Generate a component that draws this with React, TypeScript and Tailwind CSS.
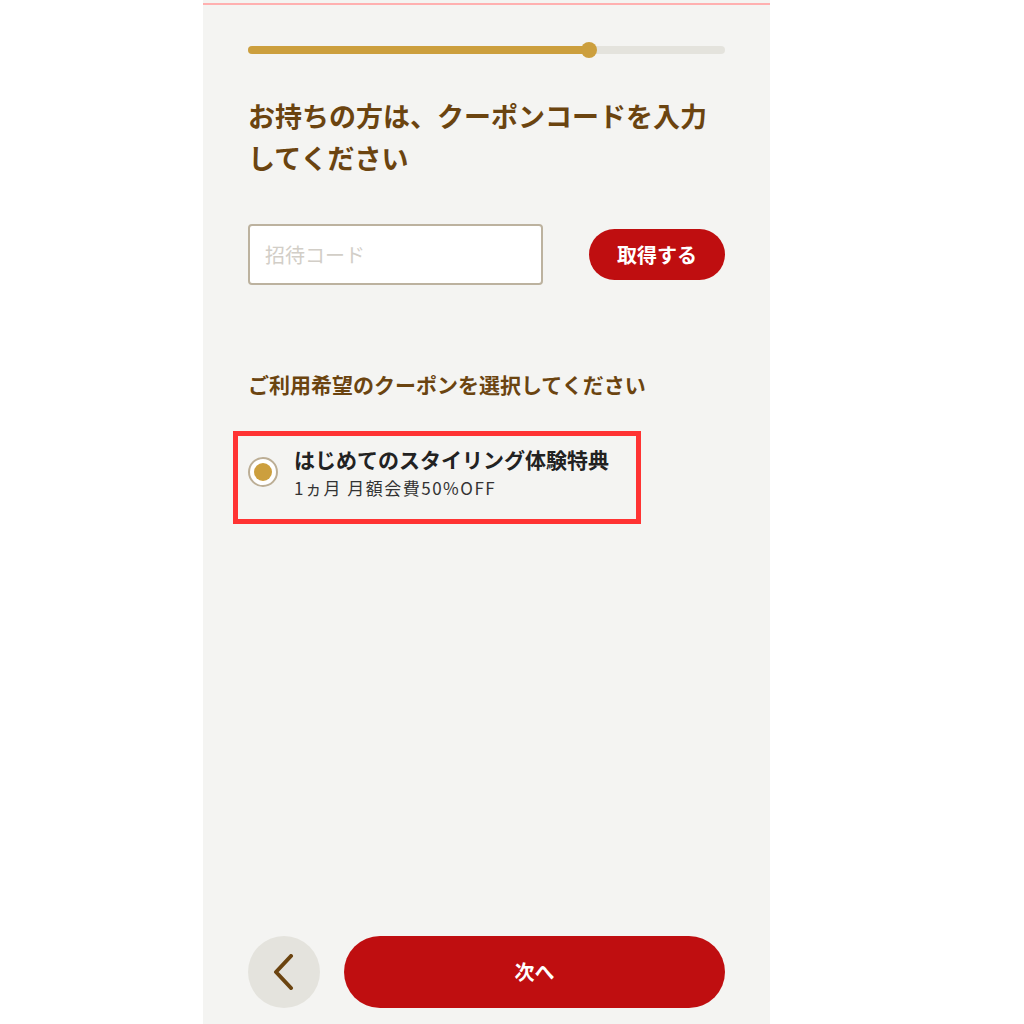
import { useState } from "react";

const jp = "font-['Noto_Sans_CJK_JP','Noto_Sans',sans-serif]";

export default function App() {
  const [code, setCode] = useState("");
  const [selected, setSelected] = useState(true);

  return (
    <div className={`flex min-h-screen justify-center bg-white ${jp}`}>
      <div className="ml-[-51px] flex h-[1024px] w-[567px] flex-col bg-[#f4f4f2] pt-[3px]">
        <div className="h-[2px] bg-[#ffb0b0]" />

        <div className="flex flex-1 flex-col px-[45px]">
          {/* progress */}
          <div className="relative mt-[41px] h-[8px] rounded-full bg-[#e4e3dd]">
            <div className="h-full w-[341px] rounded-full bg-[#cc9f3e]" />
            <div className="absolute left-[333px] top-[-4px] h-[16px] w-[16px] rounded-full bg-[#cc9f3e]" />
          </div>

          <h1 className="mt-[41px] text-[27px] font-bold leading-[42px] text-[#6b4410]">
            お持ちの方は、クーポンコードを入力してください
          </h1>

          <div className="mt-[45px] flex items-center justify-between">
            <input
              type="text"
              value={code}
              onChange={(e) => setCode(e.target.value)}
              placeholder="招待コード"
              className="h-[61px] w-[295px] rounded-[4px] border-2 border-[#bcb29f] bg-white px-[15px] text-[20px] text-[#333] outline-none placeholder:text-[#d2cec7]"
            />
            <button className="h-[51px] w-[136px] rounded-full bg-[#bf0e10] text-[20px] font-bold text-white">
              取得する
            </button>
          </div>

          <p className="mt-[84px] text-[21px] font-bold leading-[30px] text-[#6b4410]">
            ご利用希望のクーポンを選択してください
          </p>

          {/* coupon option */}
          <button
            onClick={() => setSelected(!selected)}
            className="ml-[-15px] mt-[32px] flex h-[93px] w-[408px] items-start border-[5px] border-[#ff3333] pl-[10px] text-left"
          >
            <span className="mt-[21px] flex h-[30px] w-[30px] shrink-0 items-center justify-center rounded-full border-2 border-[#bcae95] bg-white">
              {selected && <span className="h-[18px] w-[18px] rounded-full bg-[#cc9f3e]" />}
            </span>
            <span className="ml-[16px] mt-[8px] flex flex-col">
              <span className="text-[21px] font-bold leading-[30px] text-[#222]">
                はじめてのスタイリング体験特典
              </span>
              <span className="mt-[2px] text-[17px] leading-[24px] tracking-[1.5px] text-[#333]">
                1ヵ月 月額会費50%OFF
              </span>
            </span>
          </button>

          {/* footer */}
          <div className="mt-auto mb-[16px] flex items-center gap-[24px]">
            <button className="flex h-[72px] w-[72px] shrink-0 items-center justify-center rounded-full bg-[#e4e3dd]">
              <svg width="24" height="36" viewBox="0 0 24 36" fill="none">
                <path
                  d="M19 2 L4 18 L19 34"
                  stroke="#6b4410"
                  strokeWidth="4"
                  strokeLinecap="round"
                  strokeLinejoin="round"
                />
              </svg>
            </button>
            <button className="h-[72px] flex-1 rounded-full bg-[#bf0e10] text-[20px] font-bold text-white">
              次へ
            </button>
          </div>
        </div>
      </div>
    </div>
  );
}
